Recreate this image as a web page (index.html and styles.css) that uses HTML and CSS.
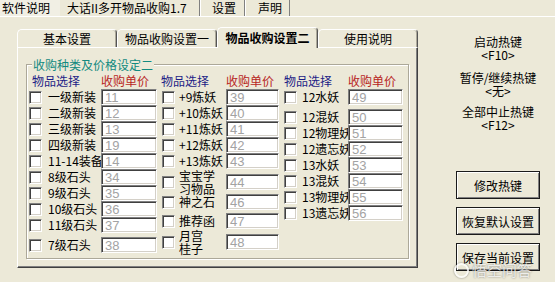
FILE: index.html
```html
<!DOCTYPE html>
<html lang="zh">
<head>
<meta charset="utf-8">
<link rel="stylesheet" href="styles.css">
</head>
<body>
<div class="topbar">
  <div class="ttab t1">软件说明</div>
  <div class="ttab t2">大话II多开物品收购1.7</div>
  <div class="ttab t3">设置</div>
  <div class="ttab t4">声明</div>
</div>
<div class="main">
  <div class="tabwrap">
    <div class="tabs">
      <div class="tab">基本设置</div>
      <div class="tab">物品收购设置一</div>
      <div class="tab active">物品收购设置二</div>
      <div class="tab">使用说明</div>
    </div>
    <div class="panel">
      <div class="group">
        <div class="legend">收购种类及价格设定二</div>
        <div class="cols">
          <div class="col c1">
            <div class="row hdr"><span class="h-sel">物品选择</span><span class="h-price">收购单价</span></div>
            <div class="row"><i class="cb"></i><span class="lbl">一级新装</span><span class="inp">11</span></div>
            <div class="row"><i class="cb"></i><span class="lbl">二级新装</span><span class="inp">12</span></div>
            <div class="row"><i class="cb"></i><span class="lbl">三级新装</span><span class="inp">13</span></div>
            <div class="row"><i class="cb"></i><span class="lbl">四级新装</span><span class="inp">19</span></div>
            <div class="row"><i class="cb"></i><span class="lbl">11-14装备</span><span class="inp">14</span></div>
            <div class="row"><i class="cb"></i><span class="lbl">8级石头</span><span class="inp">34</span></div>
            <div class="row"><i class="cb"></i><span class="lbl">9级石头</span><span class="inp">35</span></div>
            <div class="row"><i class="cb"></i><span class="lbl">10级石头</span><span class="inp">36</span></div>
            <div class="row"><i class="cb"></i><span class="lbl">11级石头</span><span class="inp">37</span></div>
            <div class="row gap4"><i class="cb"></i><span class="lbl">7级石头</span><span class="inp">38</span></div>
          </div>
          <div class="col c2">
            <div class="row hdr"><span class="h-sel">物品选择</span><span class="h-price">收购单价</span></div>
            <div class="row"><i class="cb"></i><span class="lbl">+9炼妖</span><span class="inp">39</span></div>
            <div class="row"><i class="cb"></i><span class="lbl">+10炼妖</span><span class="inp">40</span></div>
            <div class="row"><i class="cb"></i><span class="lbl">+11炼妖</span><span class="inp">41</span></div>
            <div class="row"><i class="cb"></i><span class="lbl">+12炼妖</span><span class="inp">42</span></div>
            <div class="row"><i class="cb"></i><span class="lbl">+13炼妖</span><span class="inp">43</span></div>
            <div class="row tall"><i class="cb"></i><span class="lbl two">宝宝学<br>习物品</span><span class="inp">44</span></div>
            <div class="row"><i class="cb"></i><span class="lbl">神之石</span><span class="inp">46</span></div>
            <div class="row gap3"><i class="cb"></i><span class="lbl">推荐函</span><span class="inp">47</span></div>
            <div class="row tall"><i class="cb"></i><span class="lbl two">月宫<br>桂子</span><span class="inp">48</span></div>
          </div>
          <div class="col c3">
            <div class="row hdr"><span class="h-sel">物品选择</span><span class="h-price">收购单价</span></div>
            <div class="row"><i class="cb"></i><span class="lbl">12水妖</span><span class="inp">49</span></div>
            <div class="row gap4"><i class="cb"></i><span class="lbl">12混妖</span><span class="inp">50</span></div>
            <div class="row"><i class="cb"></i><span class="lbl">12物理妖</span><span class="inp">51</span></div>
            <div class="row"><i class="cb"></i><span class="lbl">12遗忘妖</span><span class="inp">52</span></div>
            <div class="row"><i class="cb"></i><span class="lbl">13水妖</span><span class="inp">53</span></div>
            <div class="row"><i class="cb"></i><span class="lbl">13混妖</span><span class="inp">54</span></div>
            <div class="row"><i class="cb"></i><span class="lbl">13物理妖</span><span class="inp">55</span></div>
            <div class="row"><i class="cb"></i><span class="lbl">13遗忘妖</span><span class="inp">56</span></div>
          </div>
        </div>
      </div>
    </div>
  </div>
  <div class="side">
    <div class="hk">启动热键<br>&lt;F10&gt;</div>
    <div class="hk hk2">暂停/继续热键<br>&lt;无&gt;</div>
    <div class="hk hk3">全部中止热键<br>&lt;F12&gt;</div>
    <div class="btn first">修改热键</div>
    <div class="btn">恢复默认设置</div>
    <div class="btn">保存当前设置</div>
  </div>
</div>
<div class="wm"><span class="wm-ico"></span>悟空问答</div>
</body>
</html>
```
FILE: styles.css
```css
body {
  margin: 0;
  width: 555px;
  height: 282px;
  overflow: hidden;
  position: relative;
  background: #ece9d8;
  font-family: "Noto Sans CJK SC", "Noto Sans", sans-serif;
  font-size: 12px;
  color: #000;
}

.topbar {
  display: flex;
  height: 16px;
  line-height: 16px;
  border-bottom: 1px solid #fff;
}
.ttab { box-sizing: border-box; white-space: nowrap; }
.t1 { width: 60px; padding-left: 2px; background: #f1efe4; }
.t2 { width: 140px; padding-left: 7px; border-right: 1px solid #808080; }
.t3 { width: 45px; padding-left: 12px; border-right: 1px solid #808080; box-shadow: inset 1px 0 #fff; }
.t4 { width: 45px; padding-left: 13px; border-right: 1px solid #808080; box-shadow: inset 1px 0 #fff; }

.main { display: flex; }

.tabwrap {
  margin-left: 17px;
  padding-top: 10px;
  width: 401px;
}
.tabs {
  display: flex;
  align-items: flex-end;
  height: 20px;
  position: relative;
  z-index: 1;
}
.tab {
  box-sizing: border-box;
  width: 100px;
  height: 18px;
  border: 1px solid #fff;
  border-right-color: #555;
  border-bottom: none;
  border-radius: 5px 4px 0 0;
  box-shadow: inset -1px 0 #aca899;
  text-align: center;
  line-height: 17px;
  background: #ece9d8;
}
.tab.active {
  width: 101px;
  height: 21px;
  margin-bottom: -1px;
  font-weight: bold;
  line-height: 19px;
}

.panel {
  box-sizing: border-box;
  height: 221px;
  border: 1px solid;
  border-color: #fff #404040 #404040 #fff;
  box-shadow: inset -1px -1px #808080;
  padding: 16px 8px 0 8px;
}

.group {
  box-sizing: border-box;
  height: 195px;
  border: 1px solid #aca899;
  box-shadow: 1px 1px 0 #fff, inset 1px 1px 0 #fff;
}
.legend {
  width: fit-content;
  margin: -7px 0 0 5px;
  padding: 0 1px;
  line-height: 13px;
  background: #ece9d8;
  color: #128a80;
}

.cols {
  display: flex;
  gap: 5px;
  margin: 2px 0 0 2px;
}
.c1 { --cols: 13px 59px 56px; --lp: 6px; }
.c2 { --cols: 13px 51px 53px; --lp: 4px; }
.c3 { --cols: 13px 51px 55px; --lp: 5px; }

.row {
  display: grid;
  grid-template-columns: var(--cols);
  align-items: center;
  height: 16px;
  line-height: 16px;
}
.row.gap4 { margin-top: 4px; }
.row.gap3 { margin-top: 3px; }
.row.tall { height: 25px; }

.hdr .h-sel { grid-column: 1 / 3; color: #1d1d86; white-space: nowrap; }
.hdr .h-price { grid-column: 3; color: #b8261e; white-space: nowrap; }
.c1 .h-sel { margin-left: 3px; }
.c2 .h-sel { margin-left: -1px; }

.cb {
  display: block;
  box-sizing: border-box;
  width: 13px;
  height: 13px;
  background: #fff;
  border: 1px solid;
  border-color: #808080 #fff #fff #808080;
  box-shadow: inset 1px 1px #404040, inset -1px -1px #d4d0c8;
}
.lbl {
  padding-left: var(--lp);
  white-space: nowrap;
  overflow: visible;
}
.lbl.two { line-height: 13px; }
.inp {
  position: relative;
  box-sizing: border-box;
  height: 16px;
  padding-left: 3px;
  background: #fff;
  border: 1px solid;
  border-color: #808080 #fff #fff #808080;
  box-shadow: inset 1px 1px #404040, inset -1px -1px #d4d0c8;
  font-family: "Liberation Sans", Arial, sans-serif;
  font-size: 13px;
  line-height: 15px;
  color: #a3a3a3;
}

.side {
  flex: 1;
  display: flex;
  flex-direction: column;
  align-items: center;
  padding: 18px 0 0 23px;
}
.hk {
  line-height: 13px;
  text-align: center;
  white-space: nowrap;
}
.hk2 { margin-top: 10px; }
.hk3 { margin-top: 8px; }
.btn {
  box-sizing: border-box;
  width: 84px;
  height: 28px;
  margin-top: 8px;
  border: 1px solid #1a1a1a;
  box-shadow: inset 1px 1px #fff, inset -1px -1px #808080;
  display: flex;
  align-items: center;
  justify-content: center;
  white-space: nowrap;
}
.btn.first { margin-top: 40px; }

.wm {
  position: absolute;
  left: 454px;
  top: 261px;
  display: flex;
  align-items: center;
  gap: 3px;
  font-size: 15px;
  line-height: 18px;
  color: rgba(255, 255, 255, 0.8);
  text-shadow: 0 0 2px rgba(0, 0, 0, 0.5);
}
.wm-ico {
  width: 11px;
  height: 11px;
  border: 2px solid rgba(255, 255, 255, 0.8);
  border-radius: 50%;
  box-shadow: 0 0 2px rgba(0, 0, 0, 0.5);
}
```
